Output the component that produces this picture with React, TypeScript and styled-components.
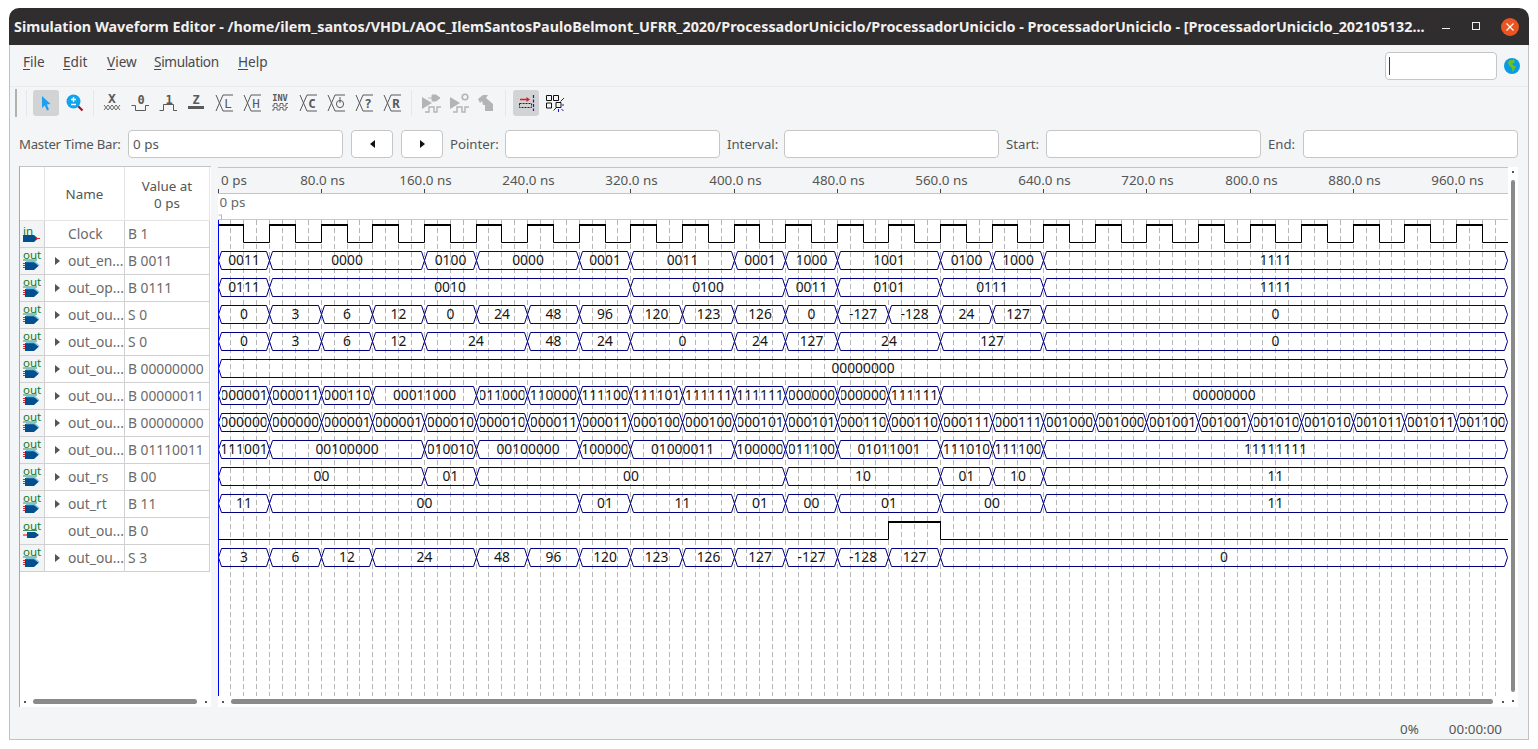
import styled, { createGlobalStyle } from "styled-components";

const GlobalStyle = createGlobalStyle`
  html, body {
    margin: 0;
    background: #ffffff;
    font-family: "Noto Sans", "Open Sans", sans-serif;
    font-size: 13.8px;
  }
  * { box-sizing: border-box; }
`;

const UI_BG = "#f4f5f7";
const BUS = "#000080";
const GREY_ICON = "#5a5a5a";
const FADED = "#b4b4b4";

const Window = styled.div`
  width: 1520px;
  height: 732px;
  margin: 8px 0 0 9px;
  display: flex;
  flex-direction: column;
  background: ${UI_BG};
  border-radius: 10px 10px 0 0;
  overflow: hidden;
`;

const TitleBar = styled.div`
  height: 37px;
  flex: none;
  display: flex;
  align-items: center;
  padding: 0 10px 0 5px;
  background: #302d2e;
  color: #f0f0f0;
`;

const TitleText = styled.div`
  font-size: 14.35px;
  font-weight: 700;
  white-space: nowrap;
`;

const WinControls = styled.div`
  margin-left: auto;
  display: flex;
  align-items: center;
`;

const WinButton = styled.div<{ $gap: number }>`
  width: 18px;
  height: 18px;
  margin-left: ${(p) => p.$gap}px;
  display: flex;
  align-items: center;
  justify-content: center;
`;

const MinGlyph = styled.div`
  width: 8px;
  height: 1px;
  margin-top: 4px;
  background: #f0f0f0;
`;

const MaxGlyph = styled.div`
  width: 8px;
  height: 8px;
  margin-top: -1px;
  border: 1px solid #f0f0f0;
`;

const CloseButton = styled(WinButton)`
  border-radius: 50%;
  background: #e95420;
`;

const Body = styled.div`
  flex: 1;
  display: flex;
  flex-direction: column;
  border: 1px solid #c2c2c2;
  border-top: 0;
`;

const MenuBar = styled.div`
  height: 42px;
  flex: none;
  display: flex;
  align-items: center;
  padding: 0 8px 0 13px;
  border-bottom: 1px solid #e9eaec;
`;

const MenuItem = styled.span<{ $w: number; $track?: number }>`
  width: ${(p) => p.$w}px;
  padding-bottom: 9px;
  color: #4a4a4a;
  font-size: 13.6px;
  letter-spacing: ${(p) => p.$track ?? 0}px;
  u { text-underline-offset: 2px; }
`;

const SearchBox = styled.div`
  margin-left: auto;
  width: 112px;
  height: 28px;
  display: flex;
  align-items: center;
  padding-left: 3px;
  background: #ffffff;
  border: 1px solid #c6c6c6;
  border-radius: 4px;
  &::before {
    content: "";
    width: 1px;
    height: 18px;
    background: #3a3a3a;
  }
`;

const Globe = styled.svg`
  width: 16px;
  height: 16px;
  margin-left: 7px;
`;

const Toolbar = styled.div`
  height: 31px;
  flex: none;
  display: flex;
  align-items: center;
  padding-left: 5px;
`;

const Handle = styled.div`
  width: 2px;
  height: 28px;
  margin-right: 3px;
  background: #b2b2ac;
`;

const ToolSep = styled.div<{ $after?: number }>`
  width: 1px;
  height: 26px;
  margin: 0 ${(p) => p.$after ?? 5}px 0 6px;
  background: #e6e7e9;
`;

const ToolButton = styled.div<{ $active?: boolean }>`
  width: 26px;
  height: 26px;
  margin-right: 2px;
  border-radius: 3px;
  background: ${(p) => (p.$active ? "#d2d3d4" : "transparent")};
  &:last-child { margin-right: 0; }
  svg { display: block; width: 26px; height: 26px; }
`;

const ToolGroup = styled.div`
  display: flex;
`;

const TimeRow = styled.div`
  height: 28px;
  flex: none;
  margin-top: 12px;
  padding-left: 9px;
  display: flex;
  align-items: center;
  gap: 7px;
`;

const TimeLabel = styled.label<{ $w: number; $track?: number }>`
  width: ${(p) => p.$w}px;
  flex: none;
  color: #555555;
  font-size: 13.2px;
  letter-spacing: ${(p) => p.$track ?? 0}px;
  white-space: nowrap;
`;

const TimeField = styled.input`
  width: 215px;
  height: 28px;
  flex: none;
  padding: 0 4px;
  background: #ffffff;
  border: 1px solid #c6c6c6;
  border-radius: 4px;
  color: #555555;
  font-family: inherit;
  font-size: 13.4px;
  outline: none;
`;

const StepButton = styled.button`
  width: 42px;
  height: 28px;
  flex: none;
  margin-left: 1px;
  padding: 0;
  display: flex;
  align-items: center;
  justify-content: center;
  background: #ffffff;
  border: 1px solid #c6c6c6;
  border-radius: 4px;
`;

const StepArrow = styled.span<{ $left?: boolean }>`
  width: 0;
  height: 0;
  border-top: 4px solid transparent;
  border-bottom: 4px solid transparent;
  ${(p) =>
    p.$left ? "border-right: 5px solid #111;" : "border-left: 5px solid #111;"}
`;

const Main = styled.div`
  height: 541px;
  flex: none;
  margin-top: 8px;
  padding-left: 9px;
  display: flex;
`;

const NodePanel = styled.div`
  width: 192px;
  flex: none;
  display: flex;
  flex-direction: column;
  background: #ffffff;
  border-left: 1px solid #a9a9a9;
  border-top: 1px solid #c4c4c4;
`;

const NodeRows = styled.div`
  flex: 1;
`;

const NodeRow = styled.div<{ $head?: boolean }>`
  display: grid;
  width: 190px;
  grid-template-columns: 25px 80px 85px;
  height: ${(p) => (p.$head ? 54 : 27)}px;
  border-bottom: 1px solid ${(p) => (p.$head ? "#e4e4e4" : "#d0d0d0")};
`;

const IconCell = styled.div<{ $head?: boolean }>`
  background: ${(p) => (p.$head ? "#ffffff" : "#f3f4f6")};
  border-right: 1px solid ${(p) => (p.$head ? "#e4e4e4" : "#d0d0d0")};
  svg { display: block; width: 24px; height: 26px; }
`;

const NameCell = styled.div<{ $expand?: boolean }>`
  position: relative;
  padding-left: 23px;
  line-height: 26px;
  color: #6a6a6a;
  white-space: nowrap;
  border-right: 1px solid #d0d0d0;
  ${(p) =>
    p.$expand &&
    `&::before {
      content: "";
      position: absolute;
      left: 10px;
      top: 9px;
      border-top: 4px solid transparent;
      border-bottom: 4px solid transparent;
      border-left: 5px solid #555;
    }`}
`;

const ValueCell = styled.div`
  padding-left: 3px;
  line-height: 26px;
  color: #6a6a6a;
  white-space: nowrap;
  border-right: 1px solid #d0d0d0;
`;

const HeadCell = styled.div`
  display: flex;
  align-items: center;
  justify-content: center;
  padding-top: 2px;
  text-align: center;
  line-height: 17px;
  color: #555555;
  font-size: 13.4px;
  border-right: 1px solid #e4e4e4;
`;

const HScroll = styled.div`
  height: 11px;
  flex: none;
  display: flex;
  align-items: center;
  padding: 0 4px;
  background: #ffffff;
`;

const ScrollDot = styled.div<{ $end?: boolean }>`
  width: 2px;
  height: 2px;
  flex: none;
  background: #555555;
  margin-left: ${(p) => (p.$end ? "auto" : "0")};
`;

const HThumb = styled.div<{ $w: number }>`
  width: ${(p) => p.$w}px;
  height: 5px;
  margin-left: 7px;
  border-radius: 3px;
  background: #8a8a8a;
`;

const WavePanel = styled.div`
  width: 1290px;
  flex: none;
  margin: 1px 0 0 7px;
  display: flex;
  flex-direction: column;
  background: #ffffff;
`;

const WaveSvg = styled.svg`
  display: block;
  width: 1290px;
  height: 529px;
  flex: none;
`;

const VScroll = styled.div`
  width: 10px;
  flex: none;
  margin-top: 1px;
  padding: 4px 0 5px;
  display: flex;
  flex-direction: column;
  align-items: center;
  background: #ffffff;
`;

const VThumb = styled.div`
  width: 4px;
  height: 512px;
  margin: 7px 0 auto;
  border-radius: 2px;
  background: #8a8a8a;
`;

const StatusBar = styled.div`
  flex: 1;
  display: flex;
  align-items: center;
  justify-content: flex-end;
  padding: 11px 26px 0 0;
  color: #555555;
  font-size: 13.4px;
`;

const StatusItem = styled.span<{ $gap?: number }>`
  margin-left: ${(p) => p.$gap ?? 0}px;
`;

/* waveform data: [label, slots of 40 ns] */
type Seg = [string, number];
type SignalRow = {
  name: string;
  value: string;
  pin: "in" | "out" | "bus";
  segs?: Seg[];
  highs?: [number, number][];
};

const slots = (labels: string[]): Seg[] => labels.map((l) => [l, 1]);
const counter: Seg[] = Array.from({ length: 25 }, (_, i): Seg => [i.toString(2).padStart(8, "0"), 1]);

const clockHighs: [number, number][] = Array.from({ length: 25 }, (_, i): [number, number] => [i * 40, i * 40 + 20]);

const signals: SignalRow[] = [
  { name: "Clock", value: "B 1", pin: "in", highs: clockHighs },
  {
    name: "out_en...",
    value: "B 0011",
    pin: "bus",
    segs: [["0011", 1], ["0000", 3], ["0100", 1], ["0000", 2], ["0001", 1], ["0011", 2], ["0001", 1], ["1000", 1], ["1001", 2], ["0100", 1], ["1000", 1], ["1111", 9]],
  },
  {
    name: "out_op...",
    value: "B 0111",
    pin: "bus",
    segs: [["0111", 1], ["0010", 7], ["0100", 3], ["0011", 1], ["0101", 2], ["0111", 2], ["1111", 9]],
  },
  {
    name: "out_ou...",
    value: "S 0",
    pin: "bus",
    segs: [...slots(["0", "3", "6", "12", "0", "24", "48", "96", "120", "123", "126", "0", "-127", "-128", "24", "127"]), ["0", 9]],
  },
  {
    name: "out_ou...",
    value: "S 0",
    pin: "bus",
    segs: [["0", 1], ["3", 1], ["6", 1], ["12", 1], ["24", 2], ["48", 1], ["24", 1], ["0", 2], ["24", 1], ["127", 1], ["24", 2], ["127", 2], ["0", 9]],
  },
  { name: "out_ou...", value: "B 00000000", pin: "bus", segs: [["00000000", 25]] },
  {
    name: "out_ou...",
    value: "B 00000011",
    pin: "bus",
    segs: [["00000011", 1], ["00000110", 1], ["00001100", 1], ["00011000", 2], ["00110000", 1], ["01100000", 1], ["11111000", 1], ["11111011", 1], ["11111110", 1], ["11111111", 1], ["10000000", 1], ["10000001", 1], ["11111111", 1], ["00000000", 11]],
  },
  { name: "out_ou...", value: "B 00000000", pin: "bus", segs: counter },
  {
    name: "out_ou...",
    value: "B 01110011",
    pin: "bus",
    segs: [["01110011", 1], ["00100000", 3], ["00100100", 1], ["00100000", 2], ["01000000", 1], ["01000011", 2], ["01000000", 1], ["10111000", 1], ["01011001", 2], ["01110101", 1], ["11111000", 1], ["11111111", 9]],
  },
  {
    name: "out_rs",
    value: "B 00",
    pin: "bus",
    segs: [["00", 4], ["01", 1], ["00", 6], ["10", 3], ["01", 1], ["10", 1], ["11", 9]],
  },
  {
    name: "out_rt",
    value: "B 11",
    pin: "bus",
    segs: [["11", 1], ["00", 6], ["01", 1], ["11", 2], ["01", 1], ["00", 1], ["01", 2], ["00", 2], ["11", 9]],
  },
  { name: "out_ou...", value: "B 0", pin: "out", highs: [[520, 560]] },
  {
    name: "out_ou...",
    value: "S 3",
    pin: "bus",
    segs: [["3", 1], ["6", 1], ["12", 1], ["24", 2], ["48", 1], ["96", 1], ["120", 1], ["123", 1], ["126", 1], ["127", 1], ["-127", 1], ["-128", 1], ["127", 1], ["0", 11]],
  },
];

const X0 = 218;
const X_END = 1508;
const ROW_TOP = 221;
const ROW_H = 27;
const NS = 1.29;
const timeX = (ns: number) => Math.floor(X0 + ns * NS) + 0.5;

function BusTrace({ segs, top }: { segs: Seg[]; top: number }) {
  let slot = 0;
  const y1 = top + 3.5;
  const y2 = top + 21.5;
  const mid = (y1 + y2) / 2;
  return (
    <g>
      {segs.map(([label, span], i) => {
        const a = i === 0 ? X0 + 0.5 : timeX(slot * 40);
        const b = slot + span >= 25 ? X_END - 0.5 : timeX((slot + span) * 40);
        slot += span;
        const id = `clip-${top}-${i}`;
        return (
          <g key={id}>
            <clipPath id={id}>
              <rect x={a + 3.5} y={y1} width={b - a - 6.5} height={y2 - y1} />
            </clipPath>
            <path
              d={`M${a} ${mid} L${a + 3} ${y1} H${b - 3} L${b} ${mid} L${b - 3} ${y2} H${a + 3} Z`}
              fill="none"
              stroke={BUS}
              strokeWidth="1"
            />
            <text
              x={(a + b) / 2}
              y={top + 17.4}
              textAnchor="middle"
              clipPath={`url(#${id})`}
              fill="#151515"
              fontSize="13.8"
            >
              {label}
            </text>
          </g>
        );
      })}
    </g>
  );
}

function BitTrace({ highs, top }: { highs: [number, number][]; top: number }) {
  const low = top + 21.5;
  const high = top + 4;
  let d = "";
  let prev = X0;
  highs.forEach(([from, to], i) => {
    const a = i === 0 && from === 0 ? X0 : timeX(from);
    const b = timeX(to);
    if (a > prev) d += `M${prev} ${low} H${a} `;
    d += `M${a} ${low} V${high} M${b} ${high} V${low} `;
    prev = b;
  });
  d += `M${prev} ${low} H${X_END}`;
  return (
    <g>
      <path d={d} fill="none" stroke="#000" strokeWidth="1" />
      {highs.map(([from, to]) => (
        <line
          key={from}
          x1={from === 0 ? X0 : timeX(from) - 0.5}
          x2={timeX(to) + 0.5}
          y1={high}
          y2={high}
          stroke="#000"
          strokeWidth="2"
        />
      ))}
    </g>
  );
}

function WavePlot() {
  const grid = Array.from({ length: 100 }, (_, i) => timeX((i + 1) * 10));
  const ticks = Array.from({ length: 13 }, (_, i) => i * 80);
  return (
    <WaveSvg viewBox="218 167 1290 529">
      <rect x="218" y="167" width="1290" height="26" fill={UI_BG} />
      <line x1="218" x2="1508" y1="167.5" y2="167.5" stroke="#c4c4c4" />
      <line x1="218" x2="1508" y1="193.5" y2="193.5" stroke="#c4c4c4" />
      <line x1="218" x2="1508" y1="219.5" y2="219.5" stroke="#c8c8c8" />
      {ticks.map((ns) => (
        <g key={ns}>
          <line x1={timeX(ns)} x2={timeX(ns)} y1="189" y2="193" stroke="#444" />
          <text
            x={ns === 0 ? 221 : timeX(ns) + 1}
            y="185"
            textAnchor={ns === 0 ? "start" : "middle"}
            fill="#555"
            fontSize="13.4"
          >
            {ns === 0 ? "0 ps" : `${ns.toFixed(1)} ns`}
          </text>
        </g>
      ))}
      <text x="219.5" y="207" fill="#666" fontSize="13.4">
        0 ps
      </text>
      <path d="M218.5 215 H222 M221.5 215 V220" stroke="#b8b8b8" fill="none" />
      {grid
        .filter((x) => x < X_END)
        .map((x) => (
          <line
            key={x}
            x1={x}
            x2={x}
            y1="220"
            y2="696"
            stroke="#b6b6b6"
            strokeDasharray="5 3"
          />
        ))}
      {signals.map((s, i) => {
        const top = ROW_TOP + i * ROW_H;
        return s.segs ? (
          <BusTrace key={i} segs={s.segs} top={top} />
        ) : (
          <BitTrace key={i} highs={s.highs ?? []} top={top} />
        );
      })}
      <rect x="218" y="220" width="1" height="476" fill="#0000f0" />
    </WaveSvg>
  );
}

const PIN_GREEN = "#0b7a2a";
const PIN_NAVY = "#034e8c";
const PIN_RED = "#e0242c";

function PinIcon({ pin }: { pin: SignalRow["pin"] }) {
  if (pin === "in") {
    return (
      <svg viewBox="0 0 24 26">
        <text x="3" y="13.5" fontSize="11.5" fill={PIN_GREEN} fontFamily="Noto Sans">in</text>
        <path d="M3 14 H14 L18 17.5 L14 21 H3 Z" fill={PIN_NAVY} />
        <path d="M16 17.5 H20" stroke={PIN_RED} strokeWidth="1" />
      </svg>
    );
  }
  if (pin === "out") {
    return (
      <svg viewBox="0 0 24 26">
        <text x="3" y="11.5" fontSize="11.5" fill={PIN_GREEN} fontFamily="Noto Sans">out</text>
        <path d="M3 12.5 H17" stroke={PIN_GREEN} strokeWidth="0.8" />
        <path d="M3 17 H7" stroke={PIN_RED} strokeWidth="1.2" />
        <path d="M7 14 H15 L19 17 L15 20 H7 Z" fill={PIN_NAVY} />
      </svg>
    );
  }
  return (
    <svg viewBox="0 0 24 26">
      <text x="3" y="11" fontSize="11.5" fill={PIN_GREEN} fontFamily="Noto Sans">out</text>
      <path d="M3 12 H17" stroke={PIN_GREEN} strokeWidth="0.8" />
      <path d="M3 15.5 H6 M3 17.5 H6 M3 19.5 H6" stroke={PIN_RED} strokeWidth="1" />
      <path d="M5 14 H14 L19 17.5 L14 22 H5 Z" fill={PIN_NAVY} />
      <path d="M6 13.5 H14.5 L19 17.5" stroke="#6fc3ea" strokeWidth="1.3" fill="none" />
    </svg>
  );
}

const monoProps = {
  fontFamily: "DejaVu Sans Mono, monospace",
  fontWeight: 700,
  textAnchor: "middle" as const,
  fill: GREY_ICON,
};

function TransitionIcon({ letter, thin }: { letter: string; thin?: boolean }) {
  return (
    <svg viewBox="0 0 26 26">
      <path d="M5 5 L12 21 H22 M5 21 L12 5 H22" fill="none" stroke={GREY_ICON} strokeWidth="1" />
      <text {...monoProps} x="17" y="17.5" fontSize="12.5" fontWeight={thin ? 400 : 700}>
        {letter}
      </text>
    </svg>
  );
}

function ClockTransitionIcon() {
  return (
    <svg viewBox="0 0 26 26">
      <path d="M5 5 L12 21 H22 M5 21 L12 5 H22" fill="none" stroke={GREY_ICON} strokeWidth="1" />
      <circle cx="17" cy="14" r="3.6" fill="none" stroke={GREY_ICON} />
      <path d="M17 7 V13" stroke={GREY_ICON} />
    </svg>
  );
}

function PulseLevelIcon({ level }: { level: "0" | "1" }) {
  return (
    <svg viewBox="0 0 26 26">
      <text {...monoProps} x="14" y="13.5" fontSize="12">{level}</text>
      <path
        d={level === "0" ? "M4.5 15.5 H8.5 V20.5 H18.5 V15.5 H22" : "M4.5 20.5 H8.5 V14.5 H18.5 V20.5 H22"}
        fill="none"
        stroke={GREY_ICON}
      />
    </svg>
  );
}

function FadedIcon({ kind }: { kind: "plug" | "gear" | "hammer" }) {
  return (
    <svg viewBox="0 0 26 26">
      {kind === "hammer" ? (
        <path d="M5 9 L10 5 H15 L13 8 L20 14 V21 H12 V15 H10 L9 11 L7 13 Z" fill={FADED} />
      ) : (
        <path d="M5 7 L15 13 L5 19 Z" fill={FADED} />
      )}
      {kind === "plug" && (
        <path d="M15 5 H19 L23 8 L19 11 H15 Z M11 8 H15" fill={FADED} stroke={FADED} />
      )}
      {kind === "gear" && (
        <circle cx="20" cy="7" r="2.8" fill="none" stroke={FADED} strokeWidth="1.6" />
      )}
      {kind !== "hammer" && (
        <path d="M8 22 H12 V17 H17 V22 H20 V17 H24" fill="none" stroke={FADED} strokeWidth="1.4" />
      )}
    </svg>
  );
}

function App() {
  return (
    <>
      <GlobalStyle />
      <Window>
        <TitleBar>
          <TitleText>
            Simulation Waveform Editor - /home/ilem_santos/VHDL/AOC_IlemSantosPauloBelmont_UFRR_2020/ProcessadorUniciclo/ProcessadorUniciclo - ProcessadorUniciclo - [ProcessadorUniciclo_202105132...
          </TitleText>
          <WinControls>
            <WinButton $gap={0}><MinGlyph /></WinButton>
            <WinButton $gap={12}><MaxGlyph /></WinButton>
            <CloseButton $gap={16}>
              <svg width="10" height="10" viewBox="0 0 10 10">
                <path d="M1.5 1.5 L8.5 8.5 M8.5 1.5 L1.5 8.5" stroke="#fff" strokeWidth="1.2" />
              </svg>
            </CloseButton>
          </WinControls>
        </TitleBar>
        <Body>
          <MenuBar>
            <MenuItem $w={40}><u>F</u>ile</MenuItem>
            <MenuItem $w={44}><u>E</u>dit</MenuItem>
            <MenuItem $w={47}><u>V</u>iew</MenuItem>
            <MenuItem $w={84} $track={-0.35}><u>S</u>imulation</MenuItem>
            <MenuItem $w={40}><u>H</u>elp</MenuItem>
            <SearchBox />
            <Globe viewBox="0 0 16 16">
              <circle cx="8" cy="8" r="8" fill="#0a9be6" />
              <path d="M5 2.5 L10 1.5 L11 4 L8 6 L10 8 L12 8 L10 12 L8.5 14.5 L8 10 L5.5 8 L4 5 Z" fill="#6cc022" />
            </Globe>
          </MenuBar>
          <Toolbar>
            <Handle />
            <ToolSep $after={6} />
            <ToolGroup>
              <ToolButton $active>
                <svg viewBox="0 0 26 26">
                  <path d="M9 6 L17.5 14 L13.8 14.6 L16 19.5 L14 20.5 L11.8 15.5 L9 18 Z" fill="#1e9ff2" />
                </svg>
              </ToolButton>
              <ToolButton>
                <svg viewBox="0 0 26 26">
                  <path d="M17 16 L21.5 20.5" stroke="#b01020" strokeWidth="2.2" />
                  <circle cx="12.5" cy="11.5" r="7" fill="#0ea4ee" />
                  <path d="M10 9.5 H15 M12.5 7 V12 M10 14.5 H15" stroke="#fff" strokeWidth="1.4" />
                </svg>
              </ToolButton>
            </ToolGroup>
            <ToolSep />
            <ToolGroup>
              <ToolButton>
                <svg viewBox="0 0 26 26">
                  <text {...monoProps} x="13" y="13" fontSize="13">X</text>
                  <path d="M5 15 L9 20 M9 15 L5 20 M9 15 L13 20 M13 15 L9 20 M13 15 L17 20 M17 15 L13 20 M17 15 L21 20 M21 15 L17 20" stroke={GREY_ICON} strokeWidth="0.9" />
                </svg>
              </ToolButton>
              <ToolButton><PulseLevelIcon level="0" /></ToolButton>
              <ToolButton><PulseLevelIcon level="1" /></ToolButton>
              <ToolButton>
                <svg viewBox="0 0 26 26">
                  <text {...monoProps} x="13" y="14" fontSize="12">Z</text>
                  <rect x="5" y="16" width="16" height="3" fill={GREY_ICON} />
                </svg>
              </ToolButton>
              <ToolButton><TransitionIcon letter="L" thin /></ToolButton>
              <ToolButton><TransitionIcon letter="H" thin /></ToolButton>
              <ToolButton>
                <svg viewBox="0 0 26 26">
                  <text {...monoProps} x="13" y="11" fontSize="8.6">INV</text>
                  <path d="M5 16 H7 V13.5 H10 V16 H13 V13.5 H16 V16 H19 V13.5 H21 M5 20 H7 V17.5 H10 V20 H13 V17.5 H16 V20 H19 V17.5 H21" fill="none" stroke={GREY_ICON} strokeWidth="0.9" />
                </svg>
              </ToolButton>
              <ToolButton><TransitionIcon letter="C" /></ToolButton>
              <ToolButton><ClockTransitionIcon /></ToolButton>
              <ToolButton><TransitionIcon letter="?" /></ToolButton>
              <ToolButton><TransitionIcon letter="R" /></ToolButton>
            </ToolGroup>
            <ToolSep />
            <ToolGroup>
              <ToolButton><FadedIcon kind="plug" /></ToolButton>
              <ToolButton><FadedIcon kind="gear" /></ToolButton>
              <ToolButton><FadedIcon kind="hammer" /></ToolButton>
            </ToolGroup>
            <ToolSep $after={7} />
            <ToolGroup>
              <ToolButton $active>
                <svg viewBox="0 0 26 26">
                  <path d="M7 9.5 H14" stroke="#e01b24" strokeWidth="1.4" />
                  <path d="M13.5 7 L17 9.5 L13.5 12 Z" fill="#e01b24" />
                  <rect x="6.5" y="13.5" width="12" height="4" fill="none" stroke="#222" strokeDasharray="2 1" />
                  <path d="M20.5 5 V21" stroke="#1414e0" strokeDasharray="3 1.5" strokeWidth="1.2" />
                </svg>
              </ToolButton>
              <ToolButton>
                <svg viewBox="0 0 26 26">
                  <path d="M5.5 5.5 H10.5 V10.5 H5.5 Z M12.5 5.5 H17.5 V10.5 H12.5 Z M5.5 13 H10.5 V18 H5.5 Z M15 12.5 H20 V17.5 H15 Z" fill="none" stroke="#111" />
                  <path d="M23 8 L19.5 11.5 M23 15 H21 M12.5 20.5 L15 18 M17.5 19 V22 M20.5 19 L22.5 21" stroke="#1414e0" />
                </svg>
              </ToolButton>
            </ToolGroup>
          </Toolbar>
          <TimeRow>
            <TimeLabel $w={102} $track={-0.25}>Master Time Bar:</TimeLabel>
            <TimeField readOnly value="0 ps" />
            <StepButton><StepArrow $left /></StepButton>
            <StepButton><StepArrow /></StepButton>
            <TimeLabel $w={48}>Pointer:</TimeLabel>
            <TimeField readOnly />
            <TimeLabel $w={50}>Interval:</TimeLabel>
            <TimeField readOnly />
            <TimeLabel $w={33}>Start:</TimeLabel>
            <TimeField readOnly />
            <TimeLabel $w={28}>End:</TimeLabel>
            <TimeField readOnly />
          </TimeRow>
          <Main>
            <NodePanel>
              <NodeRows>
                <NodeRow $head>
                  <IconCell $head />
                  <HeadCell>Name</HeadCell>
                  <HeadCell>Value at<br />0 ps</HeadCell>
                </NodeRow>
                {signals.map((s, i) => (
                  <NodeRow key={i}>
                    <IconCell><PinIcon pin={s.pin} /></IconCell>
                    <NameCell $expand={s.pin === "bus"}>{s.name}</NameCell>
                    <ValueCell>{s.value}</ValueCell>
                  </NodeRow>
                ))}
              </NodeRows>
              <HScroll>
                <ScrollDot />
                <HThumb $w={164} />
                <ScrollDot $end />
              </HScroll>
            </NodePanel>
            <WavePanel>
              <WavePlot />
              <HScroll>
                <ScrollDot />
                <HThumb $w={1262} />
                <ScrollDot $end />
              </HScroll>
            </WavePanel>
            <VScroll>
              <ScrollDot />
              <VThumb />
              <ScrollDot />
            </VScroll>
          </Main>
          <StatusBar>
            <StatusItem>0%</StatusItem>
            <StatusItem $gap={30}>00:00:00</StatusItem>
          </StatusBar>
        </Body>
      </Window>
    </>
  );
}

export default App;
